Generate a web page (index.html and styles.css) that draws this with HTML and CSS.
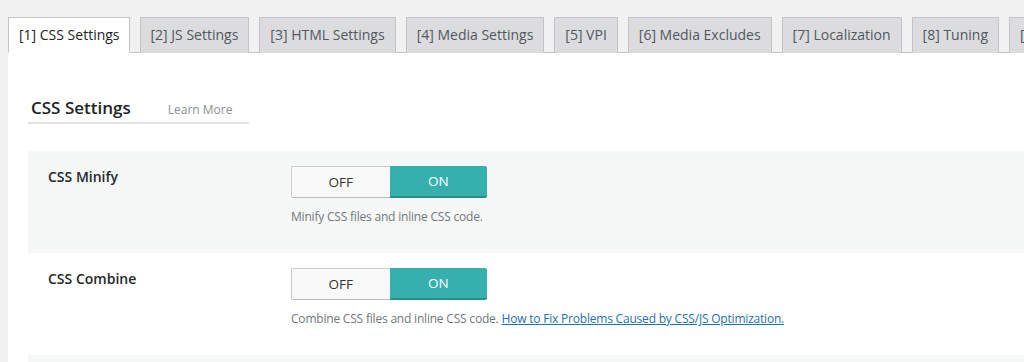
FILE: index.html
```html
<!DOCTYPE html>
<html lang="en">
<head>
    <meta charset="UTF-8">
    <title>CSS Settings</title>
    <link rel="stylesheet" href="styles.css">
</head>
<body>

<div class="wrap">
    <!-- tabs -->
    <nav class="nav-tabs">
        <a class="nav-tab active">[1] CSS Settings</a>
        <a class="nav-tab">[2] JS Settings</a>
        <a class="nav-tab">[3] HTML Settings</a>
        <a class="nav-tab">[4] Media Settings</a>
        <a class="nav-tab">[5] VPI</a>
        <a class="nav-tab">[6] Media Excludes</a>
        <a class="nav-tab">[7] Localization</a>
        <a class="nav-tab">[8] Tuning</a>
        <a class="nav-tab">[9] Debug</a>
    </nav>

    <div class="panel">
        <div class="section-title">
            <h3>CSS Settings</h3>
            <a class="learn-more">Learn More</a>
        </div>

        <div class="option-row shaded">
            <div class="option-label">CSS Minify</div>
            <div class="option-field">
                <div class="switch">
                    <span class="switch-off">OFF</span>
                    <span class="switch-on">ON</span>
                </div>
                <p class="description">Minify CSS files and inline CSS code.</p>
            </div>
        </div>

        <div class="option-row">
            <div class="option-label">CSS Combine</div>
            <div class="option-field">
                <div class="switch">
                    <span class="switch-off">OFF</span>
                    <span class="switch-on">ON</span>
                </div>
                <p class="description">Combine CSS files and inline CSS code. <a href="#">How to Fix Problems Caused by CSS/JS Optimization.</a></p>
            </div>
        </div>

        <div class="option-row shaded"></div>
    </div>
</div>

</body>
</html>
```

FILE: styles.css
```css
body {
    margin: 0;
    padding: 0;
    background-color: #f1f1f1;
    font-family: 'Open Sans', 'Noto Sans', sans-serif;
    color: #23282d;
    overflow: hidden;
}

.wrap {
    padding: 17px 0 0 8px;
}

/* tabs */
.nav-tabs {
    display: flex;
    gap: 10px;
    border-bottom: 1px solid #c3c4c7;
    white-space: nowrap;
}

.nav-tab {
    flex: none;
    padding: 0 10px;
    line-height: 34px;
    font-size: 14px;
    color: #50575e;
    background-color: #dcdcde;
    border: 1px solid #c3c4c7;
    border-bottom: none;
    margin-bottom: -1px;
}

.nav-tab.active {
    background-color: #fff;
    color: #1d2327;
    border-bottom: 1px solid #fff;
    padding: 0 9px 0 10px;
}

/* panel */
.panel {
    background-color: #fff;
    padding: 43px 0 0 20px;
    height: 400px;
}

.section-title {
    display: flex;
    align-items: baseline;
    width: 218px;
    padding-left: 3px;
    padding-bottom: 2px;
    border-bottom: 2px solid #e2e2e2;
    margin-bottom: 27px;
}

.section-title h3 {
    margin: 0;
    font-size: 17px;
    font-weight: 600;
    line-height: 24px;
    color: #1d2327;
}

.learn-more {
    margin-left: 37px;
    font-size: 12px;
    color: #8c8f94;
}

/* option rows */
.option-row {
    display: flex;
    height: 102px;
    box-sizing: border-box;
    padding-top: 15px;
}

.option-row.shaded {
    background-color: #f6f7f7;
}

.option-label {
    width: 243px;
    padding-left: 20px;
    line-height: 22px;
    font-size: 14px;
    font-weight: 600;
    color: #23282d;
}

.switch {
    display: flex;
    width: 196px;
    height: 32px;
    font-size: 13.5px;
}

.switch span {
    flex: 1;
    display: flex;
    align-items: center;
    justify-content: center;
    box-sizing: border-box;
}

.switch-off {
    background-color: #f9f9f9;
    border: 1px solid #ccc;
    border-bottom-color: #bbb;
    border-right: none;
    border-radius: 2px 0 0 2px;
    color: #333;
}

.switch-on {
    background-color: #36b0ad;
    border-bottom: 2px solid #2a8e8b;
    border-radius: 0 2px 2px 0;
    color: #fff;
}

.description {
    margin: 9px 0 0;
    font-size: 12px;
    letter-spacing: -0.2px;
    line-height: 20px;
    color: #72777c;
}

.description a {
    color: #2271b1;
}
```
